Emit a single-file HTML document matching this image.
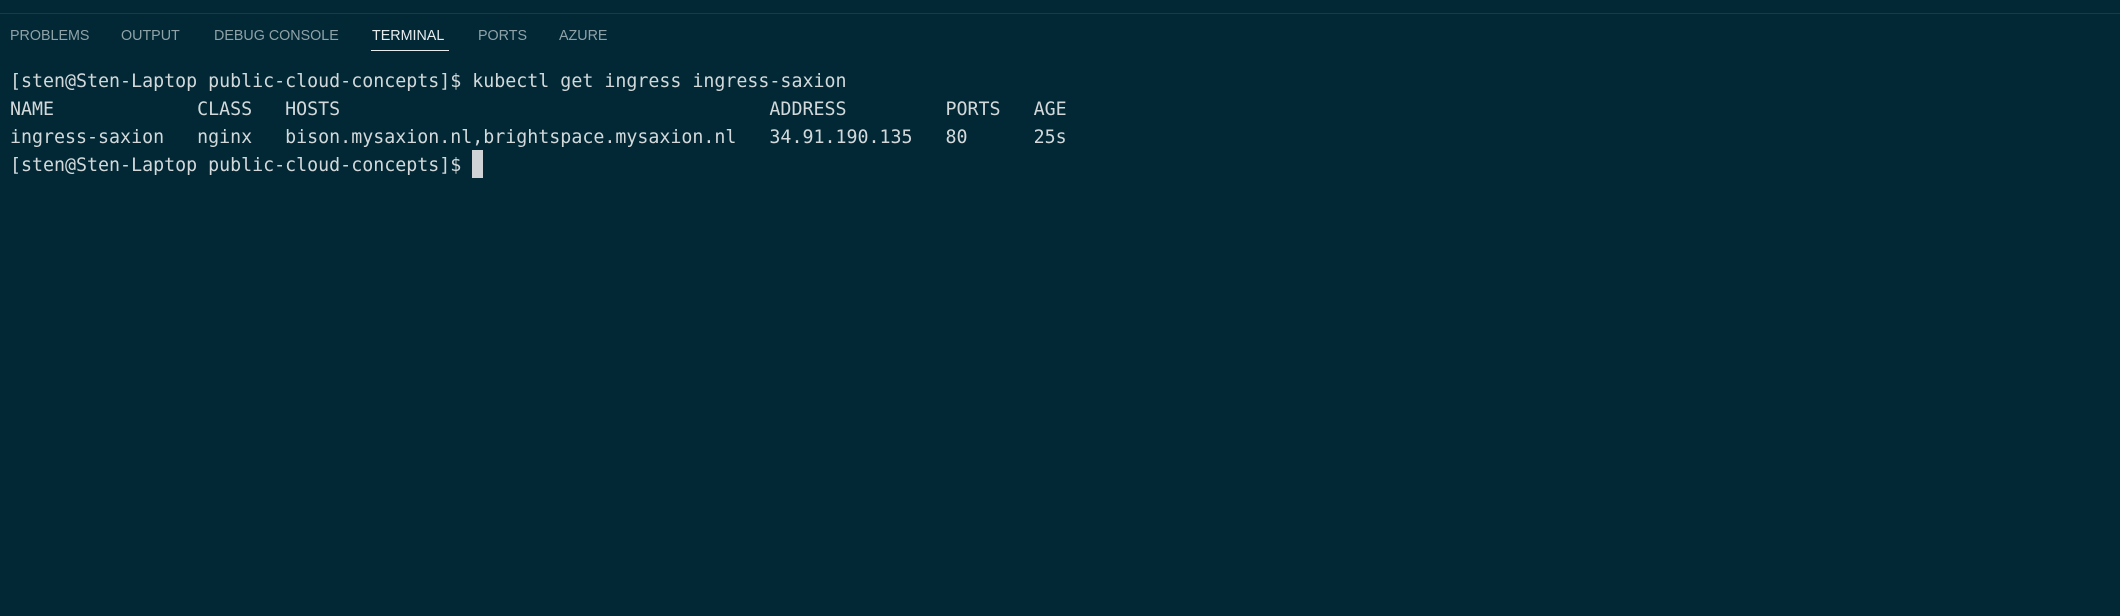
<!DOCTYPE html>
<html><head><meta charset="utf-8"><style>
html,body{margin:0;padding:0;}
body{width:2120px;height:616px;background:#022835;position:relative;overflow:hidden;}
.line{position:absolute;left:0;top:13px;width:2120px;height:1px;background:#173c48;}
.tab{position:absolute;top:28px;font:14.3px "Liberation Sans",sans-serif;color:#8fa2a8;white-space:nowrap;}
.tab.act{color:#e6ecee;}
.ul{position:absolute;left:371px;top:50px;width:78px;height:1px;background:#e6ecee;}
.t{position:absolute;left:10px;font:18.3px "DejaVu Sans Mono",monospace;color:#d3d9db;white-space:pre;line-height:28px;}
.cur{position:absolute;left:472px;top:150px;width:11px;height:28px;background:#cfd3d6;}
</style></head><body>
<div class="line"></div>
<div class="tab" style="left:10px">PROBLEMS</div>
<div class="tab" style="left:121px">OUTPUT</div>
<div class="tab" style="left:214px">DEBUG CONSOLE</div>
<div class="tab act" style="left:372px">TERMINAL</div>
<div class="tab" style="left:478px">PORTS</div>
<div class="tab" style="left:559px">AZURE</div>
<div class="ul"></div>
<div class="t" style="top:68px">[sten@Sten-Laptop public-cloud-concepts]$ kubectl get ingress ingress-saxion
NAME             CLASS   HOSTS                                       ADDRESS         PORTS   AGE
ingress-saxion   nginx   bison.mysaxion.nl,brightspace.mysaxion.nl   34.91.190.135   80      25s
[sten@Sten-Laptop public-cloud-concepts]$ </div>
<div class="cur"></div>
</body></html>
